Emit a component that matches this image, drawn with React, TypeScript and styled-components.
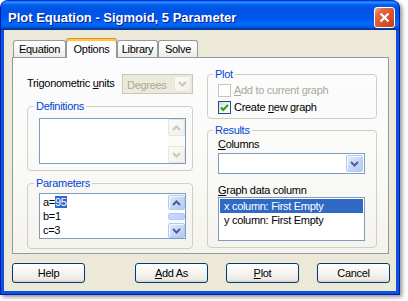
import React from "react";
import styled, { createGlobalStyle } from "styled-components";

const GlobalStyle = createGlobalStyle`
  html, body { margin: 0; padding: 0; background: #ffffff; }
  body {
    font-family: "Liberation Sans", Arial, sans-serif;
    font-size: 11px;
    letter-spacing: -0.3px;
    color: #000;
  }
  * { box-sizing: border-box; }
`;

const Page = styled.div`
  width: 408px;
  height: 301px;
`;

const Window = styled.div`
  width: 400px;
  height: 295px;
  display: flex;
  flex-direction: column;
  border: 1px solid #0019a7;
  border-top-color: #0831d9;
  border-radius: 8px 8px 0 0;
  background: #0a53e0;
  box-shadow: 2px 2px 4px rgba(0, 0, 0, 0.45);
  overflow: hidden;
`;

const TitleBar = styled.div`
  height: 29px;
  flex: none;
  display: flex;
  align-items: flex-start;
  padding: 0 4px 0 7px;
  background: linear-gradient(
    to bottom,
    #0058ee 0%,
    #3593ff 4%,
    #288eff 6%,
    #127dff 8%,
    #036ffc 10%,
    #0262ee 14%,
    #0057e5 20%,
    #0054e3 24%,
    #0055eb 56%,
    #005bf5 66%,
    #026afe 76%,
    #0062ef 86%,
    #0052d6 92%,
    #0040ab 94%,
    #003092 100%
  );
`;

const Title = styled.div`
  font-family: "Liberation Sans", Arial, sans-serif;
  font-weight: bold;
  font-size: 13px;
  line-height: 15px;
  letter-spacing: 0;
  margin-top: 9px;
  color: #ffffff;
  text-shadow: 1px 1px 0 #0a1883;
  white-space: nowrap;
`;

const CloseButton = styled.div`
  margin-left: auto;
  margin-top: 6px;
  width: 21px;
  height: 21px;
  border: 1px solid #ffffff;
  border-radius: 3px;
  background: linear-gradient(135deg, #f3b49b 0%, #e66a44 22%, #d9532f 60%, #c23d1b 100%);
  display: flex;
  align-items: center;
  justify-content: center;
`;

const Client = styled.div`
  flex: 1;
  margin: 0 3px 3px;
  background: #ece9d8;
  padding: 8px 6px 0 8px;
  display: flex;
  flex-direction: column;
`;

const TabStrip = styled.div`
  display: flex;
  align-items: flex-end;
  height: 19px;
  padding-left: 1px;
  position: relative;
  z-index: 1;
`;

const Tab = styled.div<{ $w: number; $active?: boolean }>`
  width: ${(p) => p.$w}px;
  height: ${(p) => (p.$active ? 20 : 17)}px;
  margin-bottom: ${(p) => (p.$active ? -1 : 0)}px;
  border: 1px solid #919b9c;
  border-bottom: none;
  border-top-color: ${(p) => (p.$active ? "#e68b2c" : "#919b9c")};
  border-radius: 3px 3px 0 0;
  background: ${(p) =>
    p.$active
      ? "#fcfcfe"
      : "linear-gradient(to bottom, #ffffff 0%, #f7f7f5 50%, #ecebe6 100%)"};
  box-shadow: ${(p) => (p.$active ? "inset 0 2px 0 #ffc83c" : "none")};
  display: flex;
  justify-content: center;
  padding-top: ${(p) => (p.$active ? 4 : 2)}px;
  line-height: 13px;
  white-space: nowrap;
`;

const Panel = styled.div`
  width: 377px;
  height: 197px;
  border: 1px solid #919b9c;
  background: linear-gradient(to bottom, #fcfcfe 0%, #f9f9f7 60%, #f4f3ee 100%);
  display: grid;
  grid-template-columns: 166px 170px;
  column-gap: 14px;
  padding: 10px 11px 4px 14px;
`;

const Column = styled.div`
  display: flex;
  flex-direction: column;
`;

const TrigRow = styled.div`
  margin-top: 6px;
  height: 20px;
  display: flex;
  align-items: flex-start;
  justify-content: space-between;
`;

const Label = styled.div<{ $disabled?: boolean; $pt?: number }>`
  line-height: 13px;
  padding-top: ${(p) => p.$pt ?? 0}px;
  color: ${(p) => (p.$disabled ? "#aca899" : "#000")};
  white-space: nowrap;
`;

const Key = styled.span`
  text-decoration: underline;
`;

const Combo = styled.div<{ $disabled?: boolean; $w: number; $h: number }>`
  width: ${(p) => p.$w}px;
  height: ${(p) => p.$h}px;
  border: 1px solid ${(p) => (p.$disabled ? "#c9c7ba" : "#7f9db9")};
  background: ${(p) => (p.$disabled ? "#ebeadb" : "#ffffff")};
  display: flex;
  align-items: stretch;
  padding: 1px;
`;

const ComboText = styled.div<{ $disabled?: boolean }>`
  flex: 1;
  padding: 3px 0 0 3px;
  line-height: 13px;
  color: ${(p) => (p.$disabled ? "#aca899" : "#000")};
`;

const ArrowButton = styled.div<{ $disabled?: boolean; $h?: number }>`
  width: 17px;
  height: ${(p) => (p.$h ? `${p.$h}px` : "auto")};
  flex: none;
  border-radius: 2px;
  border: 1px solid ${(p) => (p.$disabled ? "#e6e5dc" : "#b4c8f6")};
  background: ${(p) =>
    p.$disabled
      ? "linear-gradient(135deg, #fbfbf8 0%, #f1f0ea 100%)"
      : "linear-gradient(135deg, #e4ecfe 0%, #c9d8fc 45%, #b6caf7 100%)"};
  box-shadow: ${(p) => (p.$disabled ? "none" : "inset 1px 1px 0 #f4f7fe")};
  display: flex;
  align-items: center;
  justify-content: center;
`;

const Group = styled.fieldset<{ $h: number; $pt: number; $pl: number; $mt: number }>`
  margin: ${(p) => p.$mt}px 0 0 0;
  height: ${(p) => p.$h}px;
  min-width: 0;
  padding: ${(p) => p.$pt}px 6px 0 ${(p) => p.$pl}px;
  border: 1px solid #d0d0bf;
  border-radius: 4px;
  display: flex;
  flex-direction: column;
`;

const Legend = styled.legend`
  margin-left: -5px;
  padding: 0 2px;
  line-height: 13px;
  color: #0046d5;
`;

const TextBox = styled.div`
  width: 147px;
  height: 46px;
  border: 1px solid #7f9db9;
  background: #ffffff;
  display: flex;
`;

const TextLines = styled.div`
  flex: 1;
  padding: 1px 0 0 3px;
  line-height: 14px;
`;

const Selected = styled.span`
  background: #316ac5;
  color: #ffffff;
`;

const ScrollBar = styled.div<{ $pad: string }>`
  width: 17px;
  display: flex;
  flex-direction: column;
  justify-content: space-between;
  padding: ${(p) => p.$pad};
  background: #fbfbf9;
`;

const Thumb = styled.div`
  width: 17px;
  height: 7px;
  border-radius: 2px;
  border: 1px solid #b4c8f6;
  background: linear-gradient(to right, #c9d8fc, #bccefa);
`;

const ScrollGroup = styled.div`
  display: flex;
  flex-direction: column;
  gap: 3px;
`;

const CheckRow = styled.div<{ $mt?: number }>`
  display: flex;
  align-items: center;
  height: 13px;
  margin-top: ${(p) => p.$mt ?? 0}px;
`;

const CheckBox = styled.div<{ $disabled?: boolean }>`
  width: 13px;
  height: 13px;
  margin-right: 3px;
  border: 1px solid ${(p) => (p.$disabled ? "#cac8bb" : "#1c5180")};
  background: ${(p) =>
    p.$disabled ? "#ffffff" : "linear-gradient(135deg, #dcdcd7 0%, #f5f5f1 60%, #ffffff 100%)"};
  display: flex;
  align-items: center;
  justify-content: center;
`;

const Spacer = styled.div<{ $h: number }>`
  height: ${(p) => p.$h}px;
  flex: none;
`;

const ListBox = styled.div`
  width: 147px;
  height: 44px;
  border: 1px solid #7f9db9;
  background: #ffffff;
  padding: 1px 1px 0 1px;
`;

const ListItem = styled.div<{ $selected?: boolean }>`
  height: 14px;
  line-height: 14px;
  padding-left: 4px;
  background: ${(p) => (p.$selected ? "#316ac5" : "transparent")};
  color: ${(p) => (p.$selected ? "#ffffff" : "#000")};
  white-space: nowrap;
`;

const ButtonRow = styled.div`
  margin-top: 9px;
  display: flex;
  gap: 18px;
`;

const Button = styled.div<{ $push?: boolean }>`
  width: 73px;
  height: 20px;
  margin-right: ${(p) => (p.$push ? "auto" : "0")};
  border: 1px solid #003c74;
  border-radius: 3px;
  background: linear-gradient(to bottom, #ffffff 0%, #f5f4f0 50%, #ecebe6 85%, #d6d0c5 100%);
  display: flex;
  align-items: center;
  justify-content: center;
  line-height: 13px;
`;

const Chevron = ({ up, color }: { up?: boolean; color: string }) => (
  <svg width="9" height="6" viewBox="0 0 9 6">
    <path
      d={up ? "M1 5 L4.5 1.5 L8 5" : "M1 1 L4.5 4.5 L8 1"}
      fill="none"
      stroke={color}
      strokeWidth="2"
    />
  </svg>
);

const CloseIcon = () => (
  <svg width="11" height="11" viewBox="0 0 11 11">
    <path d="M1.5 1.5 L9.5 9.5 M9.5 1.5 L1.5 9.5" stroke="#ffffff" strokeWidth="2.2" />
  </svg>
);

const CheckMark = () => (
  <svg width="9" height="9" viewBox="0 0 9 9">
    <path d="M1 4.5 L3.3 7 L8 1.8" fill="none" stroke="#21a121" strokeWidth="2" />
  </svg>
);

export default function App() {
  return (
    <Page>
      <GlobalStyle />
      <Window>
        <TitleBar>
          <Title>Plot Equation - Sigmoid, 5 Parameter</Title>
          <CloseButton>
            <CloseIcon />
          </CloseButton>
        </TitleBar>
        <Client>
          <TabStrip>
            <Tab $w={53}>Equation</Tab>
            <Tab $w={51} $active>
              Options
            </Tab>
            <Tab $w={41}>Library</Tab>
            <Tab $w={40}>Solve</Tab>
          </TabStrip>
          <Panel>
            <Column>
              <TrigRow>
                <Label $pt={3}>
                  Trigonometric <Key>u</Key>nits
                </Label>
                <Combo $disabled $w={71} $h={20}>
                  <ComboText $disabled>Degrees</ComboText>
                  <ArrowButton $disabled>
                    <Chevron color="#c9c7ba" />
                  </ArrowButton>
                </Combo>
              </TrigRow>
              <Group $h={71} $pt={5} $pl={11} $mt={6}>
                <Legend>Definitions</Legend>
                <TextBox>
                  <TextLines />
                  <ScrollBar $pad="0">
                    <ArrowButton $disabled $h={17}>
                      <Chevron up color="#c9c7ba" />
                    </ArrowButton>
                    <ArrowButton $disabled $h={17}>
                      <Chevron color="#c9c7ba" />
                    </ArrowButton>
                  </ScrollBar>
                </TextBox>
              </Group>
              <Group $h={72} $pt={3} $pl={11} $mt={6}>
                <Legend>Parameters</Legend>
                <TextBox>
                  <TextLines>
                    <div>
                      a=<Selected>95</Selected>
                    </div>
                    <div>b=1</div>
                    <div>c=3</div>
                  </TextLines>
                  <ScrollBar $pad="1px 0 0 0">
                    <ScrollGroup>
                      <ArrowButton $h={15}>
                        <Chevron up color="#4d6185" />
                      </ArrowButton>
                      <Thumb />
                    </ScrollGroup>
                    <ArrowButton $h={15}>
                      <Chevron color="#4d6185" />
                    </ArrowButton>
                  </ScrollBar>
                </TextBox>
              </Group>
            </Column>
            <Column>
              <Group $h={51} $pt={3} $pl={10} $mt={0}>
                <Legend>Plot</Legend>
                <CheckRow>
                  <CheckBox $disabled />
                  <Label $disabled>
                    <Key>A</Key>dd to current graph
                  </Label>
                </CheckRow>
                <CheckRow $mt={4}>
                  <CheckBox>
                    <CheckMark />
                  </CheckBox>
                  <Label>
                    Create <Key>n</Key>ew graph
                  </Label>
                </CheckRow>
              </Group>
              <Group $h={124} $pt={1} $pl={10} $mt={5}>
                <Legend>Results</Legend>
                <Label>
                  <Key>C</Key>olumns
                </Label>
                <Spacer $h={2} />
                <Combo $w={147} $h={21}>
                  <ComboText />
                  <ArrowButton>
                    <Chevron color="#4d6185" />
                  </ArrowButton>
                </Combo>
                <Spacer $h={10} />
                <Label>
                  <Key>G</Key>raph data column
                </Label>
                <ListBox>
                  <ListItem $selected>x column: First Empty</ListItem>
                  <ListItem>y column: First Empty</ListItem>
                </ListBox>
              </Group>
            </Column>
          </Panel>
          <ButtonRow>
            <Button $push>Help</Button>
            <Button>
              <Key>A</Key>dd As
            </Button>
            <Button>
              <Key>P</Key>lot
            </Button>
            <Button>Cancel</Button>
          </ButtonRow>
        </Client>
      </Window>
    </Page>
  );
}
